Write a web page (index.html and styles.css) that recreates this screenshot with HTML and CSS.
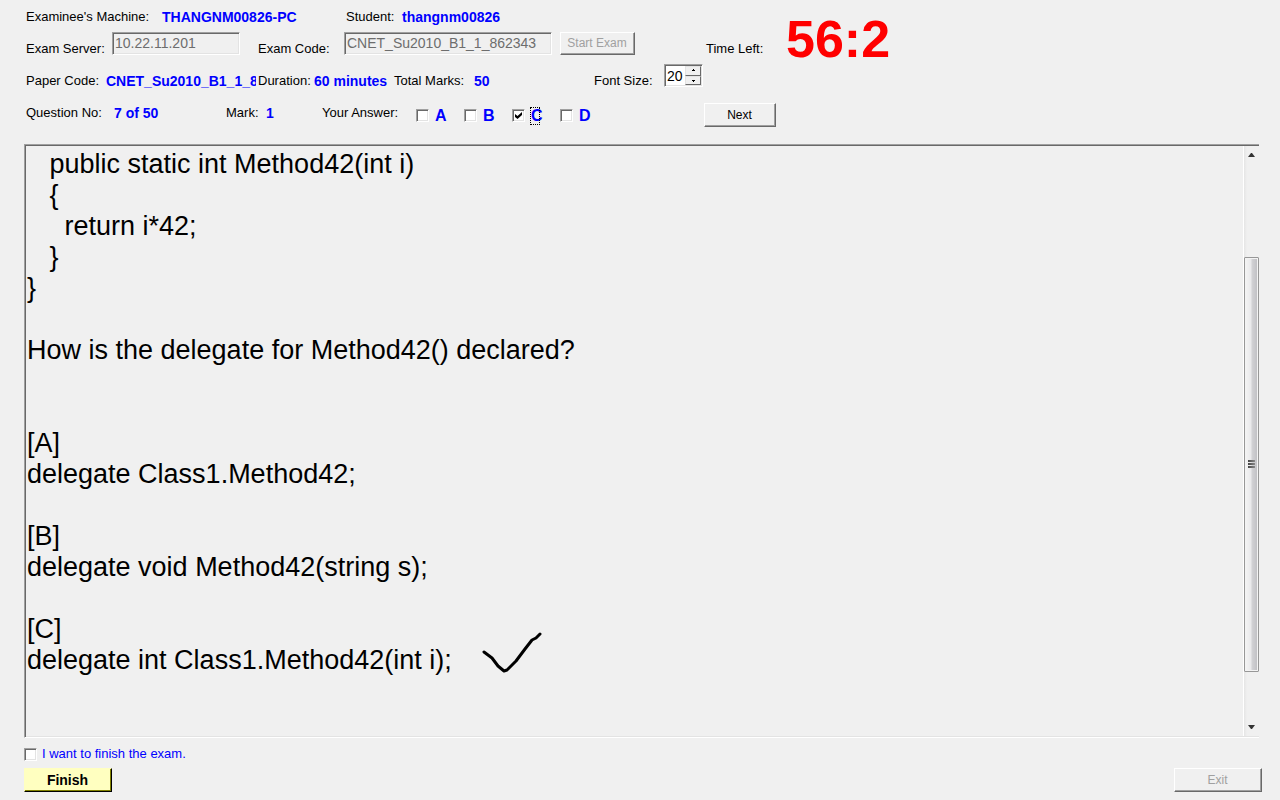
FILE: index.html
```html
<!DOCTYPE html>
<html lang="en">
<head>
<meta charset="utf-8">
<title>Exam Client</title>
<link rel="stylesheet" href="styles.css">
</head>
<body>
<form class="app">
  <header class="head">
    <div class="rows">
      <div class="row">
        <span class="w-machine">Examinee's Machine:</span><b class="val w-pc">THANGNM00826-PC</b>
        <span class="w-student">Student:</span><b class="val">thangnm00826</b>
      </div>
      <div class="row">
        <label class="w-field" for="server">Exam Server:</label><input class="sunken text server" id="server" value="10.22.11.201" disabled>
        <label class="w-field" for="code">Exam Code:</label><input class="sunken text code" id="code" value="CNET_Su2010_B1_1_862343" disabled>
        <button class="btn start" type="button" disabled>Start Exam</button>
      </div>
      <div class="row">
        <span class="w-paper">Paper Code:</span><b class="val w-papercode">CNET_Su2010_B1_1_862343</b>
        <span class="w-duration">Duration:</span><b class="val w-minutes">60 minutes</b>
        <span class="w-marks">Total Marks:</span><b class="val w-total">50</b>
        <label class="w-font" for="size">Font Size:</label>
        <div class="sunken spin">
          <input id="size" value="20">
          <div class="steps">
            <button type="button" aria-label="Larger"><svg viewBox="0 0 5 3"><path d="M2 0h1v1h1v1H1V1h1z"/></svg></button>
            <button type="button" aria-label="Smaller"><svg viewBox="0 0 5 3"><path d="M1 1h3v1H3v1H2V2H1z"/></svg></button>
          </div>
        </div>
      </div>
      <div class="row">
        <span class="w-question">Question No:</span><b class="val w-number">7 of 50</b>
        <span class="w-mark">Mark:</span><b class="val w-one">1</b>
        <span class="w-answer">Your Answer:</span>
        <div class="answers">
          <label><input class="check" type="checkbox"><span>A</span></label>
          <label><input class="check" type="checkbox"><span>B</span></label>
          <label class="focused"><input class="check" type="checkbox" checked><span>C</span></label>
          <label><input class="check" type="checkbox"><span>D</span></label>
        </div>
      </div>
    </div>
    <div class="side">
      <div class="timer"><span class="w-time">Time Left:</span><strong class="clock">56:2</strong></div>
      <button class="btn next" type="button">Next</button>
    </div>
  </header>

  <main class="panel">
    <pre class="question">   public static int Method42(int i)
   {
     return i*42;
   }
}

How is the delegate for Method42() declared?


[A]
delegate Class1.Method42;

[B]
delegate void Method42(string s);

[C]
delegate int Class1.Method42(int i);<svg class="tick" viewBox="0 0 60 42"><path d="M2 20L6 23L10 26L16 34L22 39L25 38L34 29L43 17L50 8L54 6L58 2"/></svg></pre>
    <div class="scroll" aria-hidden="true">
      <span class="arrow"><svg viewBox="0 0 7 4"><path d="M3 0h1l3 4H0z"/></svg></span>
      <span class="above"></span>
      <span class="thumb"><i></i><i></i><i></i></span>
      <span class="below"></span>
      <span class="arrow"><svg viewBox="0 0 7 4"><path d="M0 0h7L4 4H3z"/></svg></span>
    </div>
  </main>

  <footer class="foot">
    <label class="done"><input class="check" type="checkbox"><span>I want to finish the exam.</span></label>
    <div class="actions">
      <button class="btn finish" type="button">Finish</button>
      <button class="btn exit" type="button" disabled>Exit</button>
    </div>
  </footer>
</form>
</body>
</html>
```

FILE: styles.css
```css
* { box-sizing: border-box; }
body {
  margin: 0;
  background: #f0f0f0;
  color: #000;
  font: 13px/16px "Liberation Sans", Arial, sans-serif;
}
input, button { font: inherit; margin: 0; }
svg { display: block; }

.app { display: flex; flex-direction: column; min-height: 100vh; }

/* Header fields */
.head { display: flex; height: 144px; padding-left: 26px; }
.rows { flex: 0 0 678px; }
.row { display: flex; height: 32px; padding-top: 9px; white-space: nowrap; }
.row > * { flex-shrink: 0; }
.val { color: #00f; font-size: 14px; }
.w-machine { width: 136px; }
.w-pc { width: 184px; }
.w-student { width: 56px; }
.w-field { width: 86px; }
.w-paper { width: 80px; }
.w-papercode { width: 150px; margin-right: 2px; overflow: hidden; }
.w-duration { width: 56px; }
.w-minutes { width: 80px; }
.w-marks { width: 80px; }
.w-total { width: 120px; }
.w-font { width: 70px; }
.w-question { width: 88px; }
.w-number { width: 112px; }
.w-mark { width: 40px; }
.w-one { width: 56px; }
.w-answer { width: 94px; }

.sunken {
  border: 1px solid;
  border-color: #a0a0a0 #fff #fff #a0a0a0;
  box-shadow: inset 1px 1px #696969, inset -1px -1px #e3e3e3;
}
.text {
  height: 23px;
  margin-top: -9px;
  padding: 0 2px 1px;
  background: #f0f0f0;
  color: #6d6d6d;
  font-size: 14px;
}
.server { width: 128px; margin-right: 18px; }
.code { width: 208px; margin-right: 8px; }

.btn {
  padding: 0 1px 1px 0;
  border: 1px solid;
  border-color: #fff #696969 #696969 #fff;
  box-shadow: inset -1px -1px #a0a0a0;
  background: #f0f0f0;
  color: #000;
  font-size: 12px;
}
.btn:disabled { color: #a0a0a0; }
.start { width: 75px; height: 23px; margin-top: -9px; }

.spin { display: flex; width: 39px; height: 23px; margin-top: -9px; padding: 1px; background: #fff; }
.spin input { width: 19px; padding: 0 0 0 1px; border: 0; background: #fff; font-size: 14px; }
.steps { display: flex; flex: 1; flex-direction: column; }
.steps button {
  display: grid;
  flex: 1;
  place-items: center;
  padding: 0;
  border: 1px solid;
  border-color: #e3e3e3 #696969 #696969 #e3e3e3;
  background: #f0f0f0;
}
.steps svg { width: 5px; height: 3px; }

/* Tick boxes */
.check {
  position: relative;
  width: 13px;
  height: 13px;
  appearance: none;
  border: 1px solid;
  border-color: #a0a0a0 #fff #fff #a0a0a0;
  box-shadow: inset 1px 1px #696969, inset -1px -1px #e3e3e3;
  background: #fff;
}
.check:checked::after {
  content: "";
  position: absolute;
  inset: 2px;
  background: #000;
  clip-path: polygon(0 29%, 36% 58%, 100% 0, 100% 42%, 36% 100%, 0 70%);
}
.answers { display: flex; }
.answers label { display: flex; align-items: center; gap: 6px; width: 48px; height: 24px; color: #00f; font-size: 16px; font-weight: bold; margin-top: -1px; }
.answers .check { margin-top: -1px; }
.focused span { position: relative; }
.focused span::before {
  content: "";
  position: absolute;
  inset: -1px 3px -1px -1px;
  border: 1px dotted #000;
}

/* Timer and navigation */
.side { display: flex; flex-direction: column; align-items: flex-start; justify-content: space-between; padding-bottom: 17px; }
.timer { display: flex; padding: 9px 0 0 2px; }
.w-time { width: 80px; padding-top: 32px; }
.clock { color: #f00; font-size: 52px; line-height: 60px; }
.next { width: 72px; height: 24px; }

/* Question text */
.panel {
  display: flex;
  flex: 1;
  margin: 0 21px 0 24px;
  border: 1px solid;
  border-color: #a0a0a0 transparent #fff #a0a0a0;
  border-right: 0;
  box-shadow: inset 1px 1px #696969, inset 0 -1px #e3e3e3;
}
.question {
  flex: 1;
  margin: 0;
  padding: 4px 2px 0;
  font: 27px/31px "Liberation Sans", Arial, sans-serif;
}
.tick {
  display: inline-block;
  width: 60px;
  height: 42px;
  margin: -16px 0 -10px 30px;
  vertical-align: 5px;
  fill: none;
  stroke: #000;
  stroke-width: 3;
  stroke-linecap: round;
  stroke-linejoin: round;
}
.scroll {
  display: flex;
  flex-direction: column;
  width: 16px;
  margin: 1px 0;
  border-left: 1px solid #fff;
  background: linear-gradient(90deg, #e5e5e5, #f0f0f0 3px);
}
.arrow { display: grid; flex: 0 0 17px; place-items: center; }
.arrow svg { width: 7px; height: 4px; fill: #333; }
.above { flex: 94; }
.below { flex: 47; }
.thumb {
  display: flex;
  flex: 415;
  flex-direction: column;
  align-items: center;
  justify-content: center;
  gap: 1px;
  border: 1px solid #979797;
  border-radius: 1px;
  background: linear-gradient(90deg, #f5f5f5, #e9e9eb 45%, #d1d1d4 55%, #bebec2);
  box-shadow: inset 0 0 0 1px #f3f3f3;
}
.thumb i { width: 7px; height: 2px; background: linear-gradient(90deg, #444, #888); }

/* Footer */
.foot { padding: 8px 18px 8px 24px; }
.done { display: flex; align-items: center; gap: 5px; width: max-content; color: #00f; }
.actions { display: flex; justify-content: space-between; margin-top: 6px; }
.actions .btn { width: 88px; height: 24px; }
.actions .finish {
  border-color: #ffffc0 #000 #000 #ffffc0;
  box-shadow: inset -1px -1px #818100;
  background: #ffffc0;
  font-size: 14px;
  font-weight: bold;
}
```
